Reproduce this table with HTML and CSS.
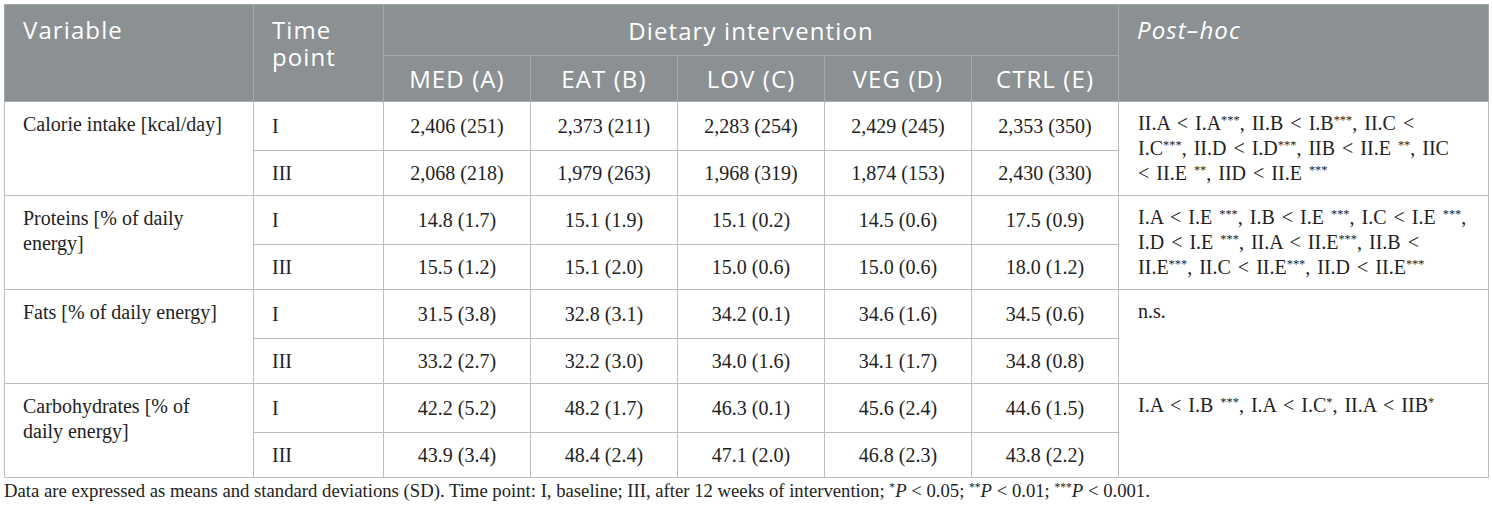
FILE: index.html
```html
<!DOCTYPE html>
<html lang="en">
<head>
<meta charset="utf-8">
<title>Dietary intervention table</title>
<link rel="stylesheet" href="styles.css">
</head>
<body>
<table class="data">
  <colgroup>
    <col class="c-var"><col class="c-time"><col class="c-num"><col class="c-num"><col class="c-num"><col class="c-num"><col class="c-num"><col class="c-post">
  </colgroup>
  <thead>
    <tr class="h1">
      <th rowspan="2" class="left top">Variable</th>
      <th rowspan="2" class="left top">Time<br>point</th>
      <th colspan="5" class="center">Dietary intervention</th>
      <th rowspan="2" class="left top"><em>Post–hoc</em></th>
    </tr>
    <tr class="h2">
      <th class="center">MED (A)</th>
      <th class="center">EAT (B)</th>
      <th class="center">LOV (C)</th>
      <th class="center">VEG (D)</th>
      <th class="center">CTRL (E)</th>
    </tr>
  </thead>
  <tbody>
    <tr class="first">
      <td rowspan="2" class="var">Calorie intake [kcal/day]</td>
      <td class="tp">I</td>
      <td>2,406 (251)</td><td>2,373 (211)</td><td>2,283 (254)</td><td>2,429 (245)</td><td>2,353 (350)</td>
      <td rowspan="2" class="post">II.A &lt; I.A<sup>***</sup>, II.B &lt; I.B<sup>***</sup>, II.C &lt;<br>I.C<sup>***</sup>, II.D &lt; I.D<sup>***</sup>, IIB &lt; II.E <sup>**</sup>, IIC<br>&lt; II.E <sup>**</sup>, IID &lt; II.E <sup>***</sup></td>
    </tr>
    <tr class="second">
      <td class="tp">III</td>
      <td>2,068 (218)</td><td>1,979 (263)</td><td>1,968 (319)</td><td>1,874 (153)</td><td>2,430 (330)</td>
    </tr>
    <tr class="first">
      <td rowspan="2" class="var">Proteins [% of daily<br>energy]</td>
      <td class="tp">I</td>
      <td>14.8 (1.7)</td><td>15.1 (1.9)</td><td>15.1 (0.2)</td><td>14.5 (0.6)</td><td>17.5 (0.9)</td>
      <td rowspan="2" class="post">I.A &lt; I.E <sup>***</sup>, I.B &lt; I.E <sup>***</sup>, I.C &lt; I.E <sup>***</sup>,<br>I.D &lt; I.E <sup>***</sup>, II.A &lt; II.E<sup>***</sup>, II.B &lt;<br>II.E<sup>***</sup>, II.C &lt; II.E<sup>***</sup>, II.D &lt; II.E<sup>***</sup></td>
    </tr>
    <tr class="second">
      <td class="tp">III</td>
      <td>15.5 (1.2)</td><td>15.1 (2.0)</td><td>15.0 (0.6)</td><td>15.0 (0.6)</td><td>18.0 (1.2)</td>
    </tr>
    <tr class="first">
      <td rowspan="2" class="var">Fats [% of daily energy]</td>
      <td class="tp">I</td>
      <td>31.5 (3.8)</td><td>32.8 (3.1)</td><td>34.2 (0.1)</td><td>34.6 (1.6)</td><td>34.5 (0.6)</td>
      <td rowspan="2" class="post">n.s.</td>
    </tr>
    <tr class="second">
      <td class="tp">III</td>
      <td>33.2 (2.7)</td><td>32.2 (3.0)</td><td>34.0 (1.6)</td><td>34.1 (1.7)</td><td>34.8 (0.8)</td>
    </tr>
    <tr class="first">
      <td rowspan="2" class="var">Carbohydrates [% of<br>daily energy]</td>
      <td class="tp">I</td>
      <td>42.2 (5.2)</td><td>48.2 (1.7)</td><td>46.3 (0.1)</td><td>45.6 (2.4)</td><td>44.6 (1.5)</td>
      <td rowspan="2" class="post">I.A &lt; I.B <sup>***</sup>, I.A &lt; I.C<sup>*</sup>, II.A &lt; IIB<sup>*</sup></td>
    </tr>
    <tr class="second">
      <td class="tp">III</td>
      <td>43.9 (3.4)</td><td>48.4 (2.4)</td><td>47.1 (2.0)</td><td>46.8 (2.3)</td><td>43.8 (2.2)</td>
    </tr>
  </tbody>
</table>
<p class="note">Data are expressed as means and standard deviations (SD). Time point: I, baseline; III, after 12 weeks of intervention; <sup>*</sup><i>P</i> &lt; 0.05; <sup>**</sup><i>P</i> &lt; 0.01; <sup>***</sup><i>P</i> &lt; 0.001.</p>
</body>
</html>
```
FILE: styles.css
```css
html, body {
  margin: 0;
  padding: 0;
  background: #ffffff;
}
body {
  padding: 4px 4px 0 4px;
  font-family: "Liberation Serif", "Times New Roman", serif;
  color: #222222;
}
.data {
  width: 1484px;
  border-collapse: collapse;
  table-layout: fixed;
  border: 1px solid #c4c4c4;
}
.c-var { width: 249px; }
.c-time { width: 130px; }
.c-num { width: 147px; }
.c-post { width: 370px; }

thead th {
  background: #8b9093;
  color: #ffffff;
  font-family: "Open Sans", "Liberation Sans", sans-serif;
  font-weight: 400;
  font-size: 24px;
  letter-spacing: 1.1px;
  line-height: 27px;
  border: 1px solid #a6a9ab;
  padding: 0 18px;
}
thead th.left { text-align: left; }
thead th.center { text-align: center; }
thead th.top { vertical-align: top; padding-top: 11px; }
thead tr.h1 { height: 51px; }
thead tr.h1 th.center { vertical-align: middle; }
thead tr.h2 { height: 46px; }
thead tr.h2 th { vertical-align: middle; }
thead em { font-style: italic; }

tbody td {
  font-size: 20px;
  line-height: 25px;
  border: 1.5px solid #bdbdbd;
  padding: 9px 18px;
  text-align: center;
  vertical-align: middle;
  color: #222222;
}
tbody tr.first { height: 49px; }
tbody tr.second { height: 45px; }
tbody td.var {
  text-align: left;
  vertical-align: top;
  padding-top: 10px;
}
tbody td.tp { text-align: left; }
tbody td.post {
  text-align: left;
  vertical-align: top;
  padding-top: 9px;
  padding-left: 19px;
  padding-right: 6px;
  word-spacing: 2px;
  white-space: nowrap;
}
sup {
  font-size: 0.62em;
  line-height: 0;
  vertical-align: 0.5em;
}
.note {
  margin: 1px 0 0 0;
  font-size: 18.7px;
  line-height: 24px;
  color: #222222;
}
.note i { font-style: italic; }
```
